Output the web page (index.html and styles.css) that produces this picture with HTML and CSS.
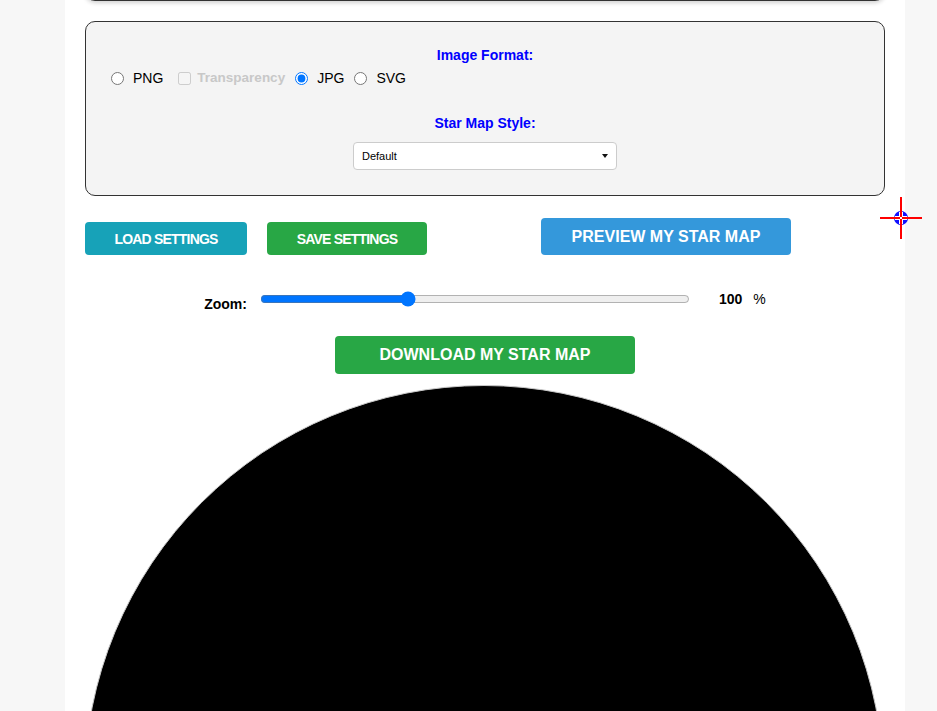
FILE: index.html
```html
<!DOCTYPE html>
<html lang="en">
<head>
<meta charset="utf-8">
<title>Star Map</title>
<link rel="stylesheet" href="styles.css">
</head>
<body>
<div class="page">
  <div class="prev-card"></div>

  <div class="format-box">
    <div class="field-label">Image Format:</div>
    <div class="format-row">
      <label class="opt"><input type="radio" name="fmt"><span>PNG</span></label>
      <label class="opt opt-check"><input type="checkbox" disabled><span class="disabled-text">Transparency</span></label>
      <label class="opt"><input type="radio" name="fmt" checked><span>JPG</span></label>
      <label class="opt"><input type="radio" name="fmt"><span>SVG</span></label>
    </div>
    <div class="field-label label-style">Star Map Style:</div>
    <div class="select-wrap">
      <select class="style-select">
        <option>Default</option>
      </select>
    </div>
  </div>

  <div class="button-row">
    <button class="btn btn-small btn-load">LOAD SETTINGS</button>
    <button class="btn btn-small btn-save">SAVE SETTINGS</button>
    <button class="btn btn-big btn-preview">PREVIEW MY STAR MAP</button>
  </div>

  <div class="zoom-row">
    <span class="zoom-label">Zoom:</span>
    <input class="zoom-range" type="range" min="0" max="295" value="100">
    <span class="zoom-value">100</span>
    <span class="zoom-unit">%</span>
  </div>

  <div class="download-row">
    <button class="btn btn-big btn-download">DOWNLOAD MY STAR MAP</button>
  </div>

  <div class="map-circle"></div>
</div>

<svg class="cursor" width="42" height="42" viewBox="0 0 42 42">
  <circle cx="21" cy="21" r="7" fill="#1010ff"/>
  <line x1="21" y1="15" x2="21" y2="27" stroke="#fff" stroke-width="4"/>
  <line x1="15" y1="21" x2="27" y2="21" stroke="#fff" stroke-width="4"/>
  <line x1="0" y1="21" x2="42" y2="21" stroke="#f00" stroke-width="2"/>
  <line x1="21" y1="0" x2="21" y2="42" stroke="#f00" stroke-width="2"/>
  <rect x="20" y="20" width="2" height="2" fill="#fff"/>
</svg>
</body>
</html>
```

FILE: styles.css
```css
html, body {
  margin: 0;
  padding: 0;
}

body {
  background: #f7f7f7;
  font-family: "Liberation Sans", Arial, sans-serif;
  color: #000;
  overflow: hidden;
  height: 711px;
}

.page {
  width: 800px;
  margin-left: 65px;
  padding: 0 20px;
  background: #fff;
  min-height: 711px;
}

.prev-card {
  height: 30px;
  margin-top: -31px;
  border: 1px solid #333;
  border-radius: 10px;
  background: #f4f4f4;
  box-shadow: 0 2px 4px rgba(0, 0, 0, 0.18);
}

.format-box {
  margin-top: 20px;
  border: 1px solid #333;
  border-radius: 10px;
  background: #f4f4f4;
  padding: 25px 25px 25px;
}

.field-label {
  text-align: center;
  color: #0000ff;
  font-weight: bold;
  font-size: 14px;
  line-height: 16px;
}

.label-style {
  margin-top: 29px;
}

.format-row {
  display: flex;
  align-items: center;
  margin-top: 7px;
  font-size: 14px;
  line-height: 16px;
}

.opt {
  display: flex;
  align-items: center;
}

.opt input {
  margin: 0 9px 0 0;
  width: 13px;
  height: 13px;
}

.opt + .opt {
  margin-left: 10px;
}

.opt-check {
  margin-left: 15px !important;
}

.opt-check input {
  margin-right: 6px;
}

.disabled-text {
  color: #c8c8c8;
  font-weight: bold;
  font-size: 13.5px;
}

.select-wrap {
  position: relative;
  width: 264px;
  margin: 11px auto 0;
}

.select-wrap::after {
  content: "";
  position: absolute;
  right: 9px;
  top: 12px;
  border-left: 3.5px solid transparent;
  border-right: 3.5px solid transparent;
  border-top: 4px solid #111;
  pointer-events: none;
}

.style-select {
  appearance: none;
  -webkit-appearance: none;
  display: block;
  width: 264px;
  height: 28px;
  border: 1px solid #ccc;
  border-radius: 4px;
  background: #fff;
  font-family: "Liberation Sans", Arial, sans-serif;
  font-size: 11px;
  color: #000;
  padding: 0 8px;
}

.button-row {
  display: flex;
  align-items: flex-end;
  margin-top: 22px;
}

.btn {
  border: none;
  border-radius: 4px;
  color: #fff;
  font-family: "Liberation Sans", Arial, sans-serif;
  font-weight: bold;
  padding: 0;
  cursor: pointer;
}

.btn-small {
  height: 33px;
  font-size: 14px;
  letter-spacing: -0.8px;
}

.btn-big {
  font-size: 16px;
}

.btn-load {
  width: 162px;
  background: #17a2b8;
}

.btn-save {
  width: 160px;
  margin-left: 20px;
  background: #28a745;
}

.btn-preview {
  width: 250px;
  height: 37px;
  margin-left: 114px;
  background: #3498db;
}

.zoom-row {
  display: flex;
  align-items: center;
  justify-content: center;
  margin-top: 34px;
  height: 20px;
  font-size: 14px;
  font-weight: bold;
}

.zoom-label {
  margin-top: 10px;
  margin-right: 13px;
}

.zoom-range {
  width: 430px;
  margin: 0;
  accent-color: #0075ff;
}

.zoom-value {
  margin-left: 29px;
}

.zoom-unit {
  margin-left: 11px;
  font-weight: normal;
}

.download-row {
  display: flex;
  justify-content: center;
  margin-top: 27px;
}

.btn-download {
  width: 300px;
  height: 38px;
  background: #28a745;
}

.map-circle {
  width: 798px;
  height: 798px;
  margin-top: 11px;
  border: 1px solid #c8c8c8;
  border-radius: 50%;
  background: #000;
  margin-left: -1px;
}

.cursor {
  position: absolute;
  left: 880px;
  top: 197px;
}
```
